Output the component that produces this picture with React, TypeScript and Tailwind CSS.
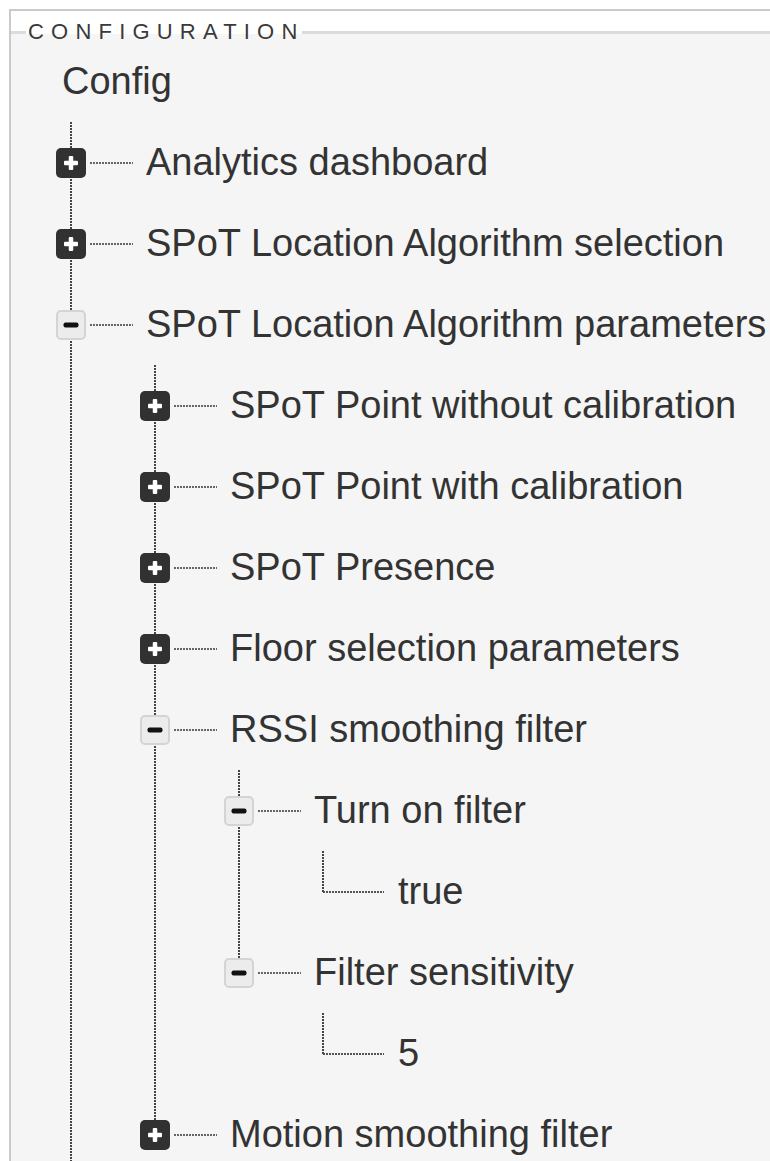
import React from "react";

type Node = {
  label: string;
  state: "closed" | "open" | "leaf";
  children?: Node[];
};

const tree: Node[] = [
  { label: "Analytics dashboard", state: "closed" },
  { label: "SPoT Location Algorithm selection", state: "closed" },
  {
    label: "SPoT Location Algorithm parameters",
    state: "open",
    children: [
      { label: "SPoT Point without calibration", state: "closed" },
      { label: "SPoT Point with calibration", state: "closed" },
      { label: "SPoT Presence", state: "closed" },
      { label: "Floor selection parameters", state: "closed" },
      {
        label: "RSSI smoothing filter",
        state: "open",
        children: [
          { label: "Turn on filter", state: "open", children: [{ label: "true", state: "leaf" }] },
          { label: "Filter sensitivity", state: "open", children: [{ label: "5", state: "leaf" }] },
        ],
      },
      { label: "Motion smoothing filter", state: "closed" },
    ],
  },
];

function PlusBox() {
  return (
    <span className="relative z-10 flex h-[30px] w-[30px] shrink-0 items-center justify-center rounded-[5px] bg-[#313131]">
      <svg width="16" height="16" viewBox="0 0 16 16">
        <rect x="1" y="5.75" width="14" height="4.5" rx="1" fill="#fff" />
        <rect x="5.75" y="1" width="4.5" height="14" rx="1" fill="#fff" />
      </svg>
    </span>
  );
}

function MinusBox() {
  return (
    <span className="relative z-10 flex h-[30px] w-[30px] shrink-0 items-center justify-center rounded-[5px] border-2 border-[#d4d4d4] bg-[#ececec]">
      <svg width="16" height="6" viewBox="0 0 16 6">
        <rect x="0.5" y="0.5" width="15" height="5" rx="2" fill="#111" />
      </svg>
    </span>
  );
}

function Item({ node, last }: { node: Node; last: boolean }) {
  const isLeaf = node.state === "leaf";
  return (
    <li className="relative">
      <div
        className={
          last
            ? "absolute left-[14px] top-0 h-[41px] w-[2px] bg-[image:repeating-linear-gradient(to_bottom,#444_0px,#444_2px,transparent_2px,transparent_3px)]"
            : "absolute left-[14px] top-0 h-full w-[2px] bg-[image:repeating-linear-gradient(to_bottom,#444_0px,#444_2px,transparent_2px,transparent_3px)]"
        }
      />
      <div className="flex h-[81px] items-center">
        {isLeaf ? (
          <>
            <span className="w-[15px] shrink-0" />
            <span className="h-[2px] w-[61px] shrink-0 bg-[image:repeating-linear-gradient(to_right,#555_0px,#555_2px,transparent_2px,transparent_3px)]" />
            <span className="ml-[14px] whitespace-nowrap text-[38px] text-[#333]">{node.label}</span>
          </>
        ) : (
          <>
            {node.state === "open" ? <MinusBox /> : <PlusBox />}
            <span className="ml-[4px] h-[2px] w-[43px] shrink-0 bg-[image:repeating-linear-gradient(to_right,#666_0px,#666_2px,transparent_2px,transparent_3px)]" />
            <span className="ml-[13px] whitespace-nowrap text-[38px] text-[#333]">{node.label}</span>
          </>
        )}
      </div>
      {node.children && node.children.length > 0 && (
        <div className="ml-[84px]">
          <List nodes={node.children} continues={false} />
        </div>
      )}
    </li>
  );
}

function List({ nodes, continues }: { nodes: Node[]; continues: boolean }) {
  return (
    <ul className="m-0 list-none p-0">
      {nodes.map((n, i) => (
        <Item key={n.label} node={n} last={!continues && i === nodes.length - 1} />
      ))}
    </ul>
  );
}

export default function App() {
  return (
    <div className="h-[1161px] w-[770px] overflow-hidden bg-white font-['Liberation_Sans',Arial,sans-serif]">
      <div className="ml-[9px] mt-[9px] min-h-[1200px] border-l-2 border-t-2 border-[#cacaca] bg-[#f5f5f5]">
        <div className="flex h-[23px] items-end bg-white">
          <span className="h-[3px] w-[15px] shrink-0 bg-[#dcdcdc]" />
          <span className="relative mb-[-9px] ml-[2px] mr-[-3px] shrink-0 whitespace-nowrap text-[22px] leading-[22px] tracking-[7.2px] text-[#3a3a3a]">
            CONFIGURATION
          </span>
          <span className="h-[3px] flex-1 bg-[#dcdcdc]" />
        </div>
        <div className="pt-[7px]">
          <div className="flex h-[81px] items-center pl-[51px]">
            <span className="whitespace-nowrap text-[38px] text-[#333]">Config</span>
          </div>
          <div className="ml-[45px]">
            <List nodes={tree} continues={true} />
          </div>
        </div>
      </div>
    </div>
  );
}
